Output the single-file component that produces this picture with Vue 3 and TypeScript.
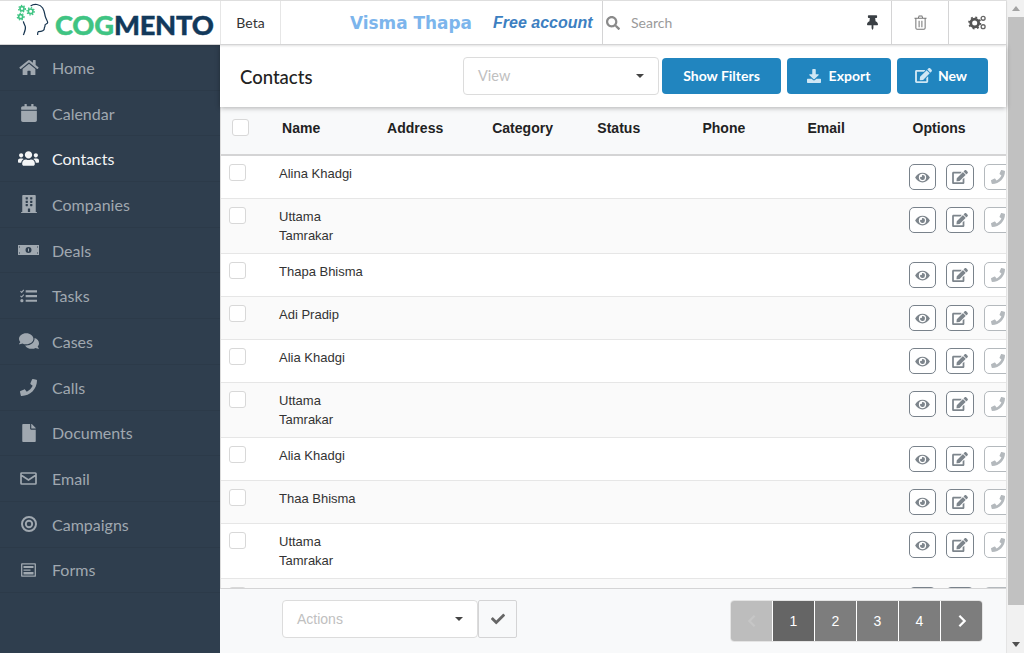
<script setup lang="ts">
const nav = [
  { label: "Home", icon: "home" },
  { label: "Calendar", icon: "calendar" },
  { label: "Contacts", icon: "users", active: true },
  { label: "Companies", icon: "building" },
  { label: "Deals", icon: "money" },
  { label: "Tasks", icon: "tasks" },
  { label: "Cases", icon: "comments" },
  { label: "Calls", icon: "phone" },
  { label: "Documents", icon: "file" },
  { label: "Email", icon: "envelope" },
  { label: "Campaigns", icon: "bullseye" },
  { label: "Forms", icon: "forms" },
];

const columns = ["Name", "Address", "Category", "Status", "Phone", "Email", "Options"];

const rows = [
  { name: "Alina Khadgi" },
  { name: "Uttama Tamrakar", tall: true },
  { name: "Thapa Bhisma" },
  { name: "Adi Pradip" },
  { name: "Alia Khadgi" },
  { name: "Uttama Tamrakar", tall: true },
  { name: "Alia Khadgi" },
  { name: "Thaa Bhisma" },
  { name: "Uttama Tamrakar", tall: true },
  { name: "" },
];
</script>

<template>
  <div class="page">
    <div class="main">
      <header class="topbar">
        <div class="logo">
          <span class="tagline">Your business cases - Human</span>
          <svg class="head" viewBox="0 0 180 132" width="60" height="44">
            <path d="M62 18C72 10 90 12 98 24c6 10 6 20 8 26 2 8 8 14 7 18-1 4-7 4-8 7 1 5-2 7-2 9 1 8-7 11-18 11-3 3-2 7-2 10" fill="none" stroke="#16344f" stroke-width="3.600"/>
            <path d="M40 105c4-10 8-17 6-25-2-6-5-10-6-16" fill="none" stroke="#16344f" stroke-width="3.600"/>
            <g fill="none" stroke="#3fc483" stroke-width="5">
              <circle cx="36" cy="26" r="6"/>
              <circle cx="62" cy="34" r="7"/>
              <circle cx="32" cy="50" r="6"/>
            </g>
            <g fill="none" stroke="#3fc483" stroke-width="4" stroke-dasharray="4 4.500">
              <circle cx="36" cy="26" r="10"/>
              <circle cx="62" cy="34" r="11"/>
              <circle cx="32" cy="50" r="10"/>
            </g>
          </svg>
          <span class="wordmark"><span class="cog">COG</span><span class="mento">MENTO</span></span>
        </div>
        <div class="beta">Beta</div>
        <div class="account">
          <span class="user-name">Visma Thapa</span>
          <span class="free">Free account</span>
        </div>
        <div class="search">
          <svg class="search-icon" viewBox="0 0 512 512" width="14" height="14">
            <path fill="#8a8a8a" d="M505 442.700L405.300 343c-4.500-4.500-10.600-7-17-7H372c27.600-35.300 44-79.700 44-128C416 93.100 322.900 0 208 0S0 93.100 0 208s93.100 208 208 208c48.300 0 92.700-16.400 128-44v16.300c0 6.400 2.500 12.500 7 17l99.700 99.700c9.400 9.400 24.600 9.400 33.900 0l28.300-28.300c9.400-9.400 9.400-24.600.1-34zM208 336c-70.700 0-128-57.200-128-128 0-70.700 57.200-128 128-128 70.700 0 128 57.200 128 128 0 70.700-57.200 128-128 128z"/>
          </svg>
          <span class="search-text">Search</span>
          <svg class="pin" viewBox="0 0 384 512" width="11" height="15">
            <path fill="#3a3f44" d="M298 214.400L285.800 96H328c13.300 0 24-10.700 24-24V24c0-13.300-10.700-24-24-24H56C42.700 0 32 10.700 32 24v48c0 13.300 10.700 24 24 24h42.200L86 214.400C37.500 236.900 0 277.300 0 328c0 13.300 10.700 24 24 24h136v104c0 1.200.2 2.500.8 3.600l24 48c2.900 5.900 11.400 6 14.300 0l24-48c.6-1.100.9-2.300.9-3.600V352h136c13.300 0 24-10.700 24-24 0-51.100-38-91.300-86-113.600z"/>
          </svg>
        </div>
        <div class="tool">
          <svg viewBox="0 0 14 16" width="13" height="15" fill="none" stroke="#777" stroke-width="1.100">
            <path d="M2 4v10a1.300 1.300 0 0 0 1.300 1.300h7.400A1.300 1.300 0 0 0 12 14V4M.5 3.500h13M4.500 3.500l1-2.600h3l1 2.600M5.500 6v7M8.500 6v7"/>
          </svg>
        </div>
        <div class="tool wide">
          <svg viewBox="0 0 20 16" width="19" height="15">
            <circle cx="7" cy="8.500" r="4.200" fill="none" stroke="#555" stroke-width="3"/>
            <circle cx="7" cy="8.500" r="6" fill="none" stroke="#555" stroke-width="2" stroke-dasharray="2 2.700"/>
            <circle cx="16" cy="3.500" r="2.100" fill="none" stroke="#666" stroke-width="1.400"/>
            <circle cx="16" cy="12.500" r="2.100" fill="none" stroke="#666" stroke-width="1.400"/>
          </svg>
        </div>
      </header>

      <div class="body">
        <aside class="sidebar">
          <a v-for="item in nav" :key="item.label" class="nav-item" :class="{ active: item.active }">
            <span class="nav-icon">
              <svg v-if="item.icon === 'home'" viewBox="0 0 576 512" width="20" height="17"><path fill="currentColor" d="M280.400 148.300L96 300.100V464a16 16 0 0 0 16 16l112.100-.3a16 16 0 0 0 15.900-16V368a16 16 0 0 1 16-16h64a16 16 0 0 1 16 16v95.600a16 16 0 0 0 16 16.100L464 480a16 16 0 0 0 16-16V300L295.700 148.300a12.200 12.200 0 0 0-15.300 0zM571.600 251.500L488 182.600V44.100a12 12 0 0 0-12-12h-56a12 12 0 0 0-12 12v72.600L318.500 43a48 48 0 0 0-61 0L4.300 251.500a12 12 0 0 0-1.600 16.900l25.500 31A12 12 0 0 0 45.200 301l235.200-193.700a12.200 12.200 0 0 1 15.300 0L530.900 301a12 12 0 0 0 16.900-1.600l25.500-31a12 12 0 0 0-1.700-16.900z"/></svg>
              <svg v-else-if="item.icon === 'calendar'" viewBox="0 0 448 512" width="16" height="18"><path fill="currentColor" d="M12 192h424c6.600 0 12 5.400 12 12v260c0 26.500-21.500 48-48 48H48c-26.500 0-48-21.500-48-48V204c0-6.600 5.400-12 12-12zm436-44v-36c0-26.500-21.500-48-48-48h-48V12c0-6.600-5.400-12-12-12h-40c-6.600 0-12 5.400-12 12v52H160V12c0-6.600-5.400-12-12-12h-40c-6.600 0-12 5.400-12 12v52H48C21.500 64 0 85.500 0 112v36c0 6.600 5.400 12 12 12h424c6.600 0 12-5.400 12-12z"/></svg>
              <svg v-else-if="item.icon === 'users'" viewBox="0 0 640 512" width="21" height="17"><path fill="currentColor" d="M96 224c35.300 0 64-28.700 64-64s-28.700-64-64-64-64 28.700-64 64 28.700 64 64 64zm448 0c35.300 0 64-28.700 64-64s-28.700-64-64-64-64 28.700-64 64 28.700 64 64 64zm32 32h-64c-17.600 0-33.500 7.100-45.100 18.600 40.300 22.100 68.900 62 75.100 109.400h66c17.700 0 32-14.300 32-32v-32c0-35.300-28.700-64-64-64zm-256 0c61.900 0 112-50.100 112-112S381.900 32 320 32 208 82.100 208 144s50.100 112 112 112zm76.800 32h-8.300c-20.800 10-43.900 16-68.500 16s-47.600-6-68.500-16h-8.300C179.600 288 128 339.600 128 403.200V432c0 26.500 21.500 48 48 48h288c26.500 0 48-21.500 48-48v-28.800c0-63.600-51.600-115.200-115.200-115.200zm-223.700-13.400C161.500 263.100 145.600 256 128 256H64c-35.300 0-64 28.700-64 64v32c0 17.700 14.300 32 32 32h65.900c6.300-47.400 34.900-87.300 75.200-109.400z"/></svg>
              <svg v-else-if="item.icon === 'building'" viewBox="0 0 448 512" width="16" height="18"><path fill="currentColor" d="M436 480h-20V24c0-13.300-10.700-24-24-24H56C42.700 0 32 10.700 32 24v456H12c-6.600 0-12 5.400-12 12v20h448v-20c0-6.600-5.400-12-12-12zM128 76c0-6.600 5.400-12 12-12h40c6.600 0 12 5.400 12 12v40c0 6.600-5.400 12-12 12h-40c-6.600 0-12-5.400-12-12V76zm0 96c0-6.600 5.400-12 12-12h40c6.600 0 12 5.400 12 12v40c0 6.600-5.400 12-12 12h-40c-6.600 0-12-5.400-12-12v-40zm52 148h-40c-6.600 0-12-5.400-12-12v-40c0-6.600 5.400-12 12-12h40c6.600 0 12 5.400 12 12v40c0 6.600-5.400 12-12 12zm76 160h-64v-84c0-6.600 5.400-12 12-12h40c6.600 0 12 5.400 12 12v84zm64-172c0 6.600-5.400 12-12 12h-40c-6.600 0-12-5.400-12-12v-40c0-6.600 5.400-12 12-12h40c6.600 0 12 5.400 12 12v40zm0-96c0 6.600-5.400 12-12 12h-40c-6.600 0-12-5.400-12-12v-40c0-6.600 5.400-12 12-12h40c6.600 0 12 5.400 12 12v40zm0-96c0 6.600-5.400 12-12 12h-40c-6.600 0-12-5.400-12-12V76c0-6.600 5.400-12 12-12h40c6.600 0 12 5.400 12 12v40z"/></svg>
              <svg v-else-if="item.icon === 'money'" viewBox="0 0 21 10" width="21" height="10"><path fill="currentColor" fill-rule="evenodd" d="M0 0h21v10H0zM2 1.500H1v1h1zM20 1.500h-1v1h1zM2 7.500H1v1h1zM20 7.500h-1v1h1zM10.500 2a3 3 0 1 0 0 6 3 3 0 0 0 0-6zM10 3.500h1v3h-1z"/></svg>
              <svg v-else-if="item.icon === 'tasks'" viewBox="0 0 18 14" width="17" height="14"><path fill="currentColor" d="M6 1h12v2.200H6zM6 6h12v2.200H6zM6 11h12v2.200H6z"/><path d="M.5 1.800l1.300 1.300L4 .6M.5 6.800l1.300 1.300L4 5.600" fill="none" stroke="currentColor" stroke-width="1.200"/><circle cx="2" cy="12" r="1.700" fill="currentColor"/></svg>
              <svg v-else-if="item.icon === 'comments'" viewBox="0 0 576 512" width="20" height="18"><path fill="currentColor" d="M416 192c0-88.400-93.100-160-208-160S0 103.600 0 192c0 34.300 14.100 65.900 38 92-13.400 30.200-35.500 54.200-35.800 54.500-2.200 2.300-2.800 5.700-1.500 8.700S4.800 352 8 352c36.600 0 66.900-12.300 88.700-25 32.200 15.700 70.300 25 111.300 25 114.900 0 208-71.600 208-160zm122 220c23.900-26 38-57.700 38-92 0-66.900-53.500-124.200-129.300-148.100.9 6.600 1.300 13.300 1.300 20.100 0 105.900-107.700 192-240 192-10.800 0-21.300-.8-31.700-1.900C207.800 439.600 281.800 480 368 480c41 0 79.100-9.200 111.300-25 21.800 12.700 52.100 25 88.700 25 3.200 0 6.100-1.900 7.300-4.800 1.300-2.900.7-6.300-1.500-8.700-.3-.3-22.400-24.200-35.800-54.500z"/></svg>
              <svg v-else-if="item.icon === 'phone'" viewBox="0 0 512 512" width="17" height="17"><path fill="currentColor" d="M493.400 24.600l-104-24c-11.300-2.600-22.900 3.300-27.500 13.900l-48 112c-4.200 9.800-1.400 21.300 6.900 28l60.600 49.600c-36 76.700-98.900 140.500-177.200 177.200l-49.600-60.600c-6.800-8.300-18.200-11.100-28-6.900l-112 48C3.900 366.500-2 378.100.6 389.400l24 104C27.100 504.200 36.700 512 48 512c256.100 0 464-207.500 464-464 0-11.200-7.700-20.900-18.600-23.400z"/></svg>
              <svg v-else-if="item.icon === 'file'" viewBox="0 0 384 512" width="14" height="18"><path fill="currentColor" d="M224 136V0H24C10.700 0 0 10.700 0 24v464c0 13.300 10.700 24 24 24h336c13.300 0 24-10.700 24-24V160H248c-13.200 0-24-10.800-24-24zm160-14.100v6.100H256V0h6.100c6.400 0 12.500 2.500 17 7l97.900 98c4.500 4.500 7 10.600 7 16.900z"/></svg>
              <svg v-else-if="item.icon === 'envelope'" viewBox="0 0 17 13" width="17" height="13"><path d="M1.700 1h13.600a.7.700 0 0 1 .7.700v9.600a.7.700 0 0 1-.7.700H1.700a.7.700 0 0 1-.7-.7V1.700a.7.700 0 0 1 .7-.7zM1 3l7.500 5L16 3" fill="none" stroke="currentColor" stroke-width="1.700"/></svg>
              <svg v-else-if="item.icon === 'bullseye'" viewBox="0 0 16 16" width="16" height="16"><circle cx="8" cy="8" r="7" fill="none" stroke="currentColor" stroke-width="2"/><circle cx="8" cy="8" r="3.200" fill="none" stroke="currentColor" stroke-width="1.900"/></svg>
              <svg v-else viewBox="0 0 15 14" width="15" height="14"><path d="M1 .8h13a.3.3 0 0 1 .3.300v11.800a.3.3 0 0 1-.3.300H1a.3.3 0 0 1-.3-.3V1.100A.3.3 0 0 1 1 .8z" fill="none" stroke="currentColor" stroke-width="1.300"/><path fill="currentColor" d="M2.500 3h10v2h-10zM2.500 6.500h7v1.300h-7zM2.500 9h10v2.500h-10z"/></svg>
            </span>
            <span class="nav-label">{{ item.label }}</span>
          </a>
        </aside>

        <section class="content">
          <div class="title-bar">
            <h1>Contacts</h1>
            <div class="title-actions">
              <div class="select view-select"><span>View</span><i class="caret"></i></div>
              <button class="btn filters">Show Filters</button>
              <button class="btn export">
                <svg viewBox="0 0 512 512" width="14" height="14"><path fill="#cfe6f4" d="M216 0h80c13.300 0 24 10.700 24 24v168h87.700c17.800 0 26.700 21.500 14.100 34.100L269.700 378.300c-7.500 7.500-19.800 7.500-27.300 0L90.100 226.100c-12.600-12.600-3.700-34.100 14.100-34.100H192V24c0-13.300 10.700-24 24-24zm296 376v112c0 13.300-10.700 24-24 24H24c-13.300 0-24-10.700-24-24V376c0-13.300 10.700-24 24-24h146.700l49 49c20.100 20.100 52.500 20.100 72.600 0l49-49H488c13.300 0 24 10.700 24 24z"/></svg>
                Export
              </button>
              <button class="btn new">
                <svg viewBox="0 0 576 512" width="17" height="15"><path fill="#cfe6f4" d="M402.600 83.200l90.200 90.200c3.800 3.800 3.800 10 0 13.800L274.400 405.600l-92.800 10.300c-12.400 1.400-22.900-9.100-21.500-21.500l10.300-92.800L388.800 83.200c3.800-3.800 10-3.800 13.800 0zm162-22.900l-48.800-48.800c-15.200-15.200-39.900-15.200-55.200 0l-35.400 35.400c-3.800 3.800-3.800 10 0 13.800l90.200 90.200c3.800 3.800 10 3.800 13.800 0l35.400-35.400c15.200-15.300 15.200-40 0-55.200zM384 346.200V448H64V128h229.800c3.200 0 6.200-1.300 8.500-3.500l40-40c7.600-7.600 2.200-20.500-8.500-20.500H48C21.500 64 0 85.500 0 112v352c0 26.500 21.500 48 48 48h352c26.500 0 48-21.500 48-48V306.200c0-10.700-12.900-16-20.500-8.500l-40 40c-2.200 2.300-3.500 5.300-3.500 8.500z"/></svg>
                New
              </button>
            </div>
          </div>

          <div class="table-wrap">
            <div class="table-head">
              <span class="col-check"><i class="check"></i></span>
              <span v-for="col in columns" :key="col" class="th">{{ col }}</span>
            </div>
            <div class="table-rows">
              <div v-for="(row, i) in rows" :key="i" class="row" :class="{ tall: row.tall, alt: i % 2 === 1 }">
                <span class="cell-check"><i class="check"></i></span>
                <span class="cell-name">{{ row.name }}</span>
                <span class="cell-options">
                  <span class="op">
                    <svg viewBox="0 0 576 512" width="15" height="13"><path fill="#7d858c" d="M572.500 241.400C518.300 135.600 410.900 64 288 64S57.700 135.600 3.500 241.400a32.400 32.400 0 0 0 0 29.200C57.700 376.400 165.100 448 288 448s230.300-71.600 284.500-177.400a32.400 32.400 0 0 0 0-29.200zM288 400a144 144 0 1 1 144-144 143.900 143.900 0 0 1-144 144zm0-240a95.300 95.300 0 0 0-25.300 3.800 47.900 47.900 0 0 1-66.900 66.900A95.800 95.800 0 1 0 288 160z"/></svg>
                  </span>
                  <span class="op edit">
                    <svg viewBox="0 0 576 512" width="16" height="14"><path fill="#7d858c" d="M402.600 83.200l90.200 90.200c3.800 3.800 3.800 10 0 13.800L274.400 405.600l-92.800 10.300c-12.400 1.400-22.900-9.100-21.500-21.500l10.300-92.800L388.800 83.200c3.800-3.800 10-3.800 13.800 0zm162-22.900l-48.800-48.800c-15.200-15.200-39.900-15.200-55.200 0l-35.400 35.400c-3.800 3.800-3.800 10 0 13.800l90.200 90.200c3.800 3.800 10 3.800 13.800 0l35.400-35.400c15.200-15.300 15.200-40 0-55.200zM384 346.200V448H64V128h229.800c3.200 0 6.200-1.300 8.500-3.500l40-40c7.600-7.600 2.200-20.500-8.500-20.500H48C21.500 64 0 85.500 0 112v352c0 26.500 21.500 48 48 48h352c26.500 0 48-21.500 48-48V306.200c0-10.700-12.900-16-20.500-8.500l-40 40c-2.200 2.300-3.500 5.300-3.500 8.500z"/></svg>
                  </span>
                  <span class="op faded">
                    <svg viewBox="0 0 512 512" width="14" height="14"><path fill="#b4b9bd" d="M493.400 24.600l-104-24c-11.300-2.600-22.900 3.300-27.500 13.900l-48 112c-4.200 9.800-1.400 21.300 6.900 28l60.600 49.600c-36 76.700-98.900 140.500-177.200 177.200l-49.600-60.600c-6.800-8.300-18.200-11.100-28-6.900l-112 48C3.900 366.500-2 378.100.6 389.400l24 104C27.100 504.200 36.700 512 48 512c256.100 0 464-207.500 464-464 0-11.200-7.700-20.900-18.600-23.400z"/></svg>
                  </span>
                </span>
              </div>
            </div>
          </div>

          <footer class="footer">
            <div class="actions">
              <div class="select actions-select"><span>Actions</span><i class="caret"></i></div>
              <button class="apply">
                <svg viewBox="0 0 512 512" width="14" height="14"><path fill="#666" d="M173.900 439.400l-166.400-166.400c-10-10-10-26.200 0-36.200l36.200-36.200c10-10 26.200-10 36.200 0L192 312.700 432.100 72.600c10-10 26.200-10 36.200 0l36.200 36.200c10 10 10 26.200 0 36.200L210.100 439.400c-10 10-26.200 10-36.200 0z"/></svg>
              </button>
            </div>
            <div class="pager">
              <span class="pg disabled">
                <svg viewBox="0 0 10 16" width="10" height="14"><path d="M8 2L2 8l6 6" fill="none" stroke="#c6c6c6" stroke-width="2.600"/></svg>
              </span>
              <span class="pg current">1</span>
              <span class="pg">2</span>
              <span class="pg">3</span>
              <span class="pg">4</span>
              <span class="pg">
                <svg viewBox="0 0 10 16" width="10" height="14"><path d="M2 2l6 6-6 6" fill="none" stroke="#fff" stroke-width="2.600"/></svg>
              </span>
            </div>
          </footer>
        </section>
      </div>
    </div>

    <div class="scrollbar">
      <i class="arrow up"></i>
      <div class="track"><div class="thumb"></div></div>
      <i class="arrow down"></i>
    </div>
  </div>
</template>

<style>
html,
body {
  margin: 0;
  height: 100%;
  overflow: hidden;
}
</style>

<style scoped>
.page {
  display: flex;
  width: 1024px;
  height: 653px;
  overflow: hidden;
  font-family: Lato, "Liberation Sans", sans-serif;
  background: #fff;
}

.main {
  width: 1007px;
  height: 653px;
  display: flex;
  flex-direction: column;
  box-sizing: border-box;
  border-right: 1px solid #e4e4e4;
}

.topbar {
  height: 45px;
  flex: none;
  display: flex;
  box-sizing: border-box;
  border-top: 1px solid #dedede;
  border-bottom: 1px solid #d4d4d5;
  box-shadow: 0 1px 2px rgba(0, 0, 0, 0.12);
  position: relative;
  z-index: 3;
  background: #fff;
}

.logo {
  width: 220px;
  flex: none;
  position: relative;
  overflow: hidden;
  display: flex;
  align-items: flex-end;
  box-sizing: border-box;
  padding: 0 0 4px 17px;
}

.tagline {
  position: absolute;
  left: 25px;
  top: -12px;
  font-size: 12px;
  color: #8fd9b4;
  letter-spacing: 0.3px;
}

.head {
  position: absolute;
  left: 10px;
  top: -1px;
}

.wordmark {
  font-family: Lato, sans-serif;
  font-weight: 900;
  font-size: 27.300px;
  line-height: 30px;
  margin-left: 38px;
  letter-spacing: -0.2px;
  -webkit-text-stroke: 0.4px currentColor;
}

.cog {
  color: #3fc483;
}

.mento {
  color: #12395b;
}

.beta {
  width: 61px;
  flex: none;
  box-sizing: border-box;
  border-left: 1px solid #e6e6e6;
  border-right: 1px solid #e6e6e6;
  display: flex;
  align-items: center;
  justify-content: center;
  font-size: 14px;
  color: #333;
}

.account {
  width: 321px;
  flex: none;
  display: flex;
  align-items: center;
  box-sizing: border-box;
  padding-left: 69px;
  font-family: "Liberation Sans", Arial, sans-serif;
  font-weight: bold;
}

.user-name {
  font-family: "DejaVu Sans", sans-serif;
  font-size: 16.900px;
  color: #7cb5ec;
  width: 143px;
  flex: none;
}

.free {
  font-size: 16px;
  font-style: italic;
  color: #3d7fc1;
}

.search {
  flex: 1;
  display: flex;
  align-items: center;
  box-sizing: border-box;
  border-left: 1px solid #d4d4d5;
  padding: 0 13px 0 3px;
}

.search-icon {
  flex: none;
}

.search-text {
  flex: 1;
  margin-left: 11px;
  font-size: 14px;
  color: #9a9a9a;
}

.tool {
  width: 57px;
  flex: none;
  box-sizing: border-box;
  border-left: 1px solid #d4d4d5;
  display: flex;
  align-items: center;
  justify-content: center;
}

.tool.wide {
  width: 58px;
}

.body {
  flex: 1;
  min-height: 0;
  display: flex;
}

.sidebar {
  width: 220px;
  flex: none;
  background: #2f3e4e;
  display: flex;
  flex-direction: column;
}

.nav-item {
  height: 45.700px;
  flex: none;
  box-sizing: border-box;
  display: flex;
  align-items: center;
  padding-left: 18px;
  color: #a0a8b0;
  font-size: 16px;
  border-bottom: 1px solid #2c3a49;
}

.nav-item.active {
  color: #f4f5f6;
}

.nav-icon {
  width: 21px;
  display: flex;
  justify-content: center;
  margin-right: 13px;
}

.content {
  flex: 1;
  min-width: 0;
  display: flex;
  flex-direction: column;
}

.title-bar {
  height: 62px;
  flex: none;
  display: flex;
  align-items: center;
  justify-content: space-between;
  box-sizing: border-box;
  padding: 0 18px 0 20px;
  box-shadow: 0 1px 5px rgba(0, 0, 0, 0.3);
  position: relative;
  z-index: 2;
  background: #fff;
}

h1 {
  margin: 2px 0 0;
  font-size: 18.500px;
  font-weight: 500;
  color: #222;
}

.title-actions {
  display: flex;
  align-items: center;
  gap: 6px;
}

.select {
  box-sizing: border-box;
  background: #fff;
  border: 1px solid #dcdcdc;
  border-radius: 4px;
  display: flex;
  align-items: center;
  justify-content: space-between;
  color: #c0c0c0;
  font-size: 14px;
}

.view-select {
  width: 196px;
  height: 38px;
  padding: 0 14px 1px;
  font-size: 14.500px;
  margin-right: -3px;
}

.actions-select {
  width: 196px;
  height: 38px;
  padding: 0 14px;
  font-family: "Liberation Sans", Arial, sans-serif;
}

.caret {
  width: 0;
  height: 0;
  border-left: 4px solid transparent;
  border-right: 4px solid transparent;
  border-top: 4px solid #444;
}

.btn {
  height: 36px;
  border: 0;
  border-radius: 4px;
  background: #2185bf;
  color: #fff;
  font-family: Lato, sans-serif;
  font-weight: 700;
  font-size: 14px;
  display: flex;
  align-items: center;
  justify-content: center;
  padding: 0 0 1px;
}

.filters {
  width: 119px;
}

.export {
  width: 104px;
  gap: 8px;
  padding-right: 1px;
}

.new {
  width: 91px;
  gap: 6px;
  padding-right: 3px;
}

.table-wrap {
  flex: 1;
  min-height: 0;
  display: flex;
  flex-direction: column;
  overflow: hidden;
  border-left: 1px solid #dcdcdc;
}

.table-head {
  height: 49px;
  flex: none;
  display: flex;
  align-items: center;
  box-sizing: border-box;
  padding-bottom: 6px;
  background: #f8f9fa;
  border-bottom: 2px solid #d4d4d5;
  font-family: "Liberation Sans", Arial, sans-serif;
  font-weight: bold;
  font-size: 14px;
  color: #222;
  letter-spacing: 0.02px;
}

.col-check {
  width: 61px;
  flex: none;
  padding-left: 11px;
  box-sizing: border-box;
  display: flex;
}

.th {
  width: 105.100px;
  flex: none;
}

.check {
  display: block;
  width: 17px;
  height: 17px;
  box-sizing: border-box;
  background: #fff;
  border: 1px solid #d8d8d8;
  border-radius: 3px;
}

.table-rows {
  flex: 1;
  min-height: 0;
  overflow: hidden;
}

.row {
  height: 43px;
  box-sizing: border-box;
  border-bottom: 1px solid #e6e6e6;
  display: flex;
  align-items: flex-start;
  background: #fff;
  position: relative;
}

.row.tall {
  height: 55px;
}

.row.alt {
  background: #fafafa;
}

.cell-check {
  width: 58px;
  flex: none;
  box-sizing: border-box;
  padding: 8px 0 0 8px;
}

.cell-name {
  width: 94px;
  flex: none;
  padding-top: 8px;
  font-family: "Liberation Sans", Arial, sans-serif;
  font-size: 13px;
  line-height: 19px;
  color: #333;
}

.cell-options {
  margin-left: auto;
  display: flex;
  gap: 10px;
  padding-top: 8px;
  width: 97px;
  flex: none;
  overflow: hidden;
}

.op {
  width: 27px;
  height: 26px;
  flex: none;
  box-sizing: border-box;
  border: 1px solid #79828b;
  border-radius: 5px;
  display: flex;
  align-items: center;
  justify-content: center;
  background: #fff;
}

.op.edit {
  width: 28px;
}

.op.faded {
  border-color: #b4b9bd;
}

.footer {
  height: 65px;
  flex: none;
  box-sizing: border-box;
  border-top: 1px solid #d4d4d5;
  background: #f8f9fa;
  display: flex;
  align-items: flex-start;
  justify-content: space-between;
  padding: 11px 23px 0 62px;
}

.actions {
  display: flex;
}

.apply {
  width: 39px;
  height: 38px;
  box-sizing: border-box;
  padding: 0;
  display: flex;
  align-items: center;
  justify-content: center;
  background: #f8f9fa;
  border: 1px solid #d4d4d5;
  border-radius: 2px;
}

.pager {
  display: flex;
  gap: 1px;
  height: 42px;
  box-sizing: border-box;
  border: 1px solid #e4e4e4;
  border-radius: 4px;
  overflow: hidden;
  background: #fff;
}

.pg {
  width: 41px;
  display: flex;
  align-items: center;
  justify-content: center;
  background: #7d7d7d;
  color: #fff;
  font-family: "Liberation Sans", Arial, sans-serif;
  font-size: 14px;
}

.pg.disabled {
  background: #bdbdbd;
}

.pg.current {
  background: #656565;
}

.scrollbar {
  width: 17px;
  flex: none;
  box-sizing: border-box;
  padding-left: 1px;
  display: flex;
  flex-direction: column;
  align-items: center;
  background: #f1f1f1;
}

.arrow {
  flex: none;
  display: block;
  width: 0;
  height: 0;
  border-left: 4px solid transparent;
  border-right: 4px solid transparent;
  margin: 6px 0;
}

.arrow.up {
  border-bottom: 5px solid #a3a3a3;
}

.arrow.down {
  border-top: 5px solid #505050;
}

.track {
  flex: 1;
  width: 100%;
  min-height: 0;
}

.thumb {
  width: 100%;
  height: 588px;
  background: #c1c1c1;
}
</style>
